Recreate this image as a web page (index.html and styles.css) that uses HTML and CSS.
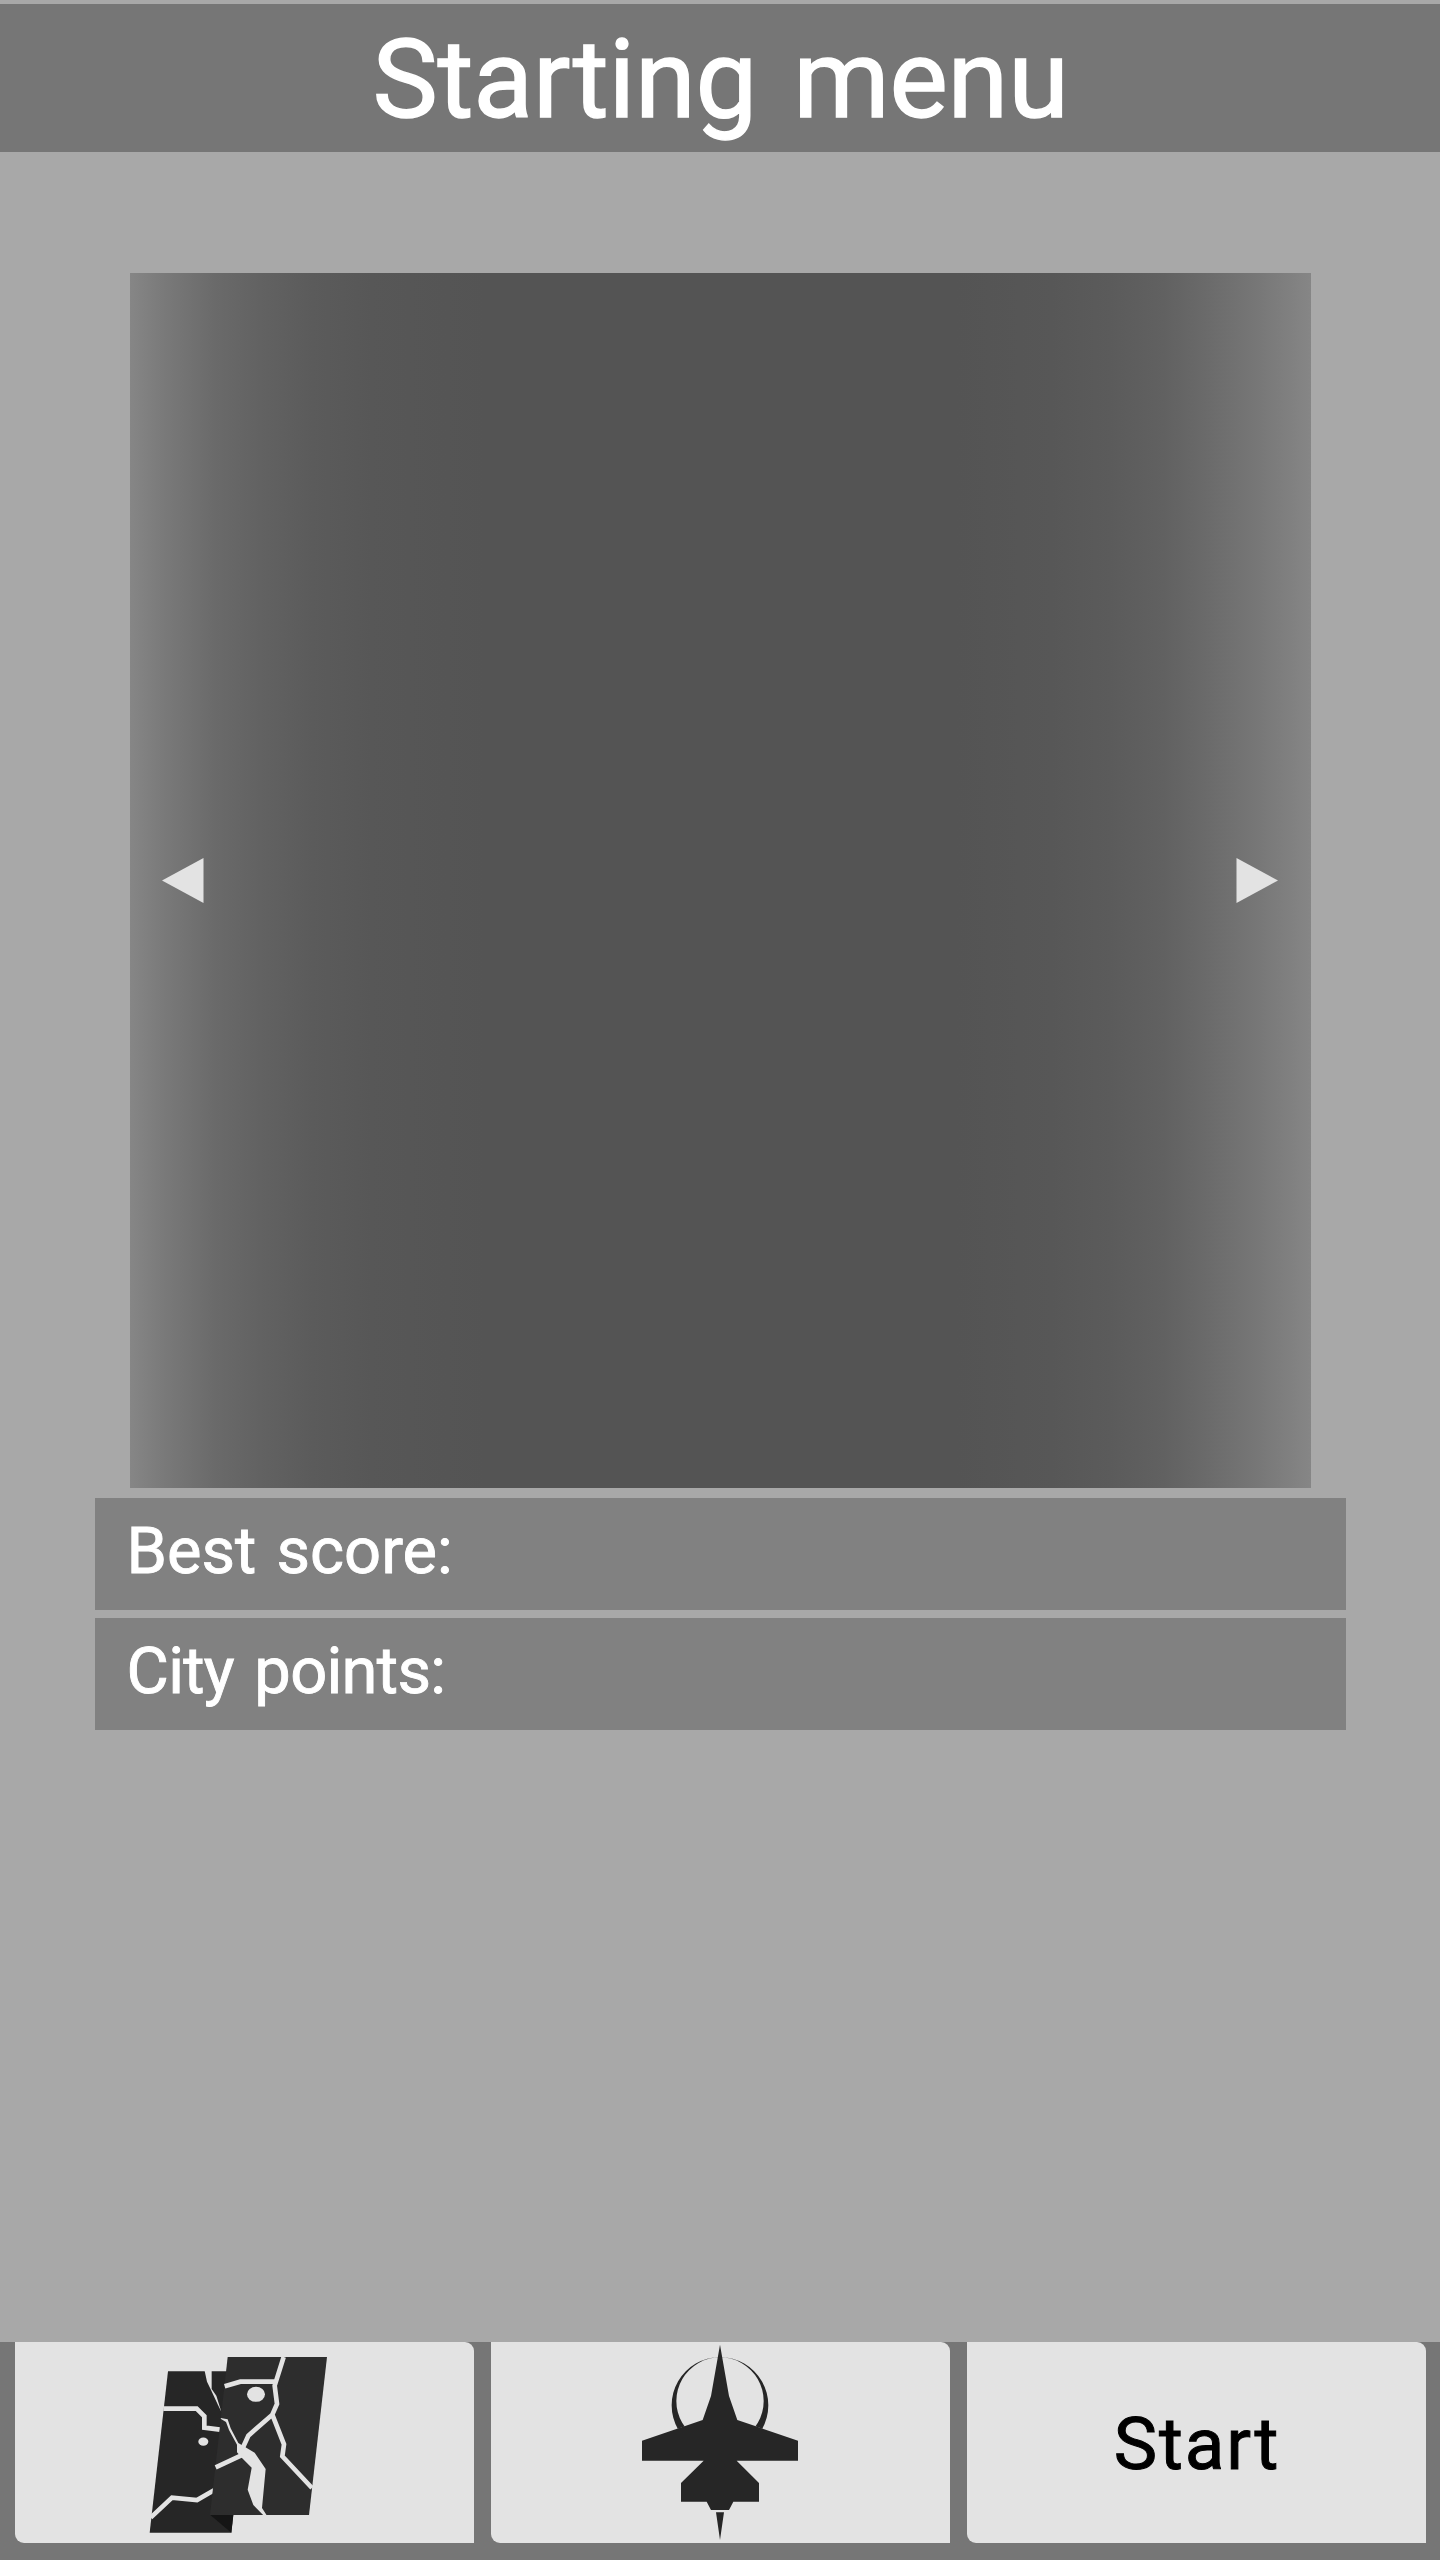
FILE: index.html
```html
<!DOCTYPE html>
<html lang="en">
<head>
<meta charset="utf-8">
<title>Starting menu</title>
<link rel="stylesheet" href="styles.css">
</head>
<body>
<div class="screen">
  <header class="header"><h1 class="title">Starting menu</h1></header>
  <main class="content">
    <section class="viewer">
      <svg class="arrow" viewBox="0 0 42 45"><path d="M0 22.5L41.5 0V45Z"/></svg>
      <svg class="arrow" viewBox="0 0 42 45"><path d="M42 22.5L.5 0V45Z"/></svg>
    </section>
    <div class="stats">
      <div class="stat"><span class="label best">Best score:</span></div>
      <div class="stat"><span class="label city">City points:</span></div>
    </div>
  </main>
  <nav class="actions">
    <button class="action" aria-label="Map">
      <svg class="icon" viewBox="-375 -9 1377 603">
        <path fill="#262626" d="M84 79H262L280 509L274 563H29Z"/>
        <path fill="#151515" d="M210 509H280L274 563Z"/>
        <path class="land" d="M194 78H215V132L229 152L244 200L234 180L213 135L201 110Z"/>
        <path class="road" d="M70 191H170L193 214V248L240 254M32 518L96 458L171 465L222 436"/>
        <ellipse class="land" cx="190" cy="290" rx="15" ry="12.500"/>
        <path fill="#2d2d2d" d="M263 36H561L507 510H210Z"/>
        <path class="land" d="M242 219L263 223L272 250L295 294L344 323L377 372L366 489L380 511H370L340 480L323 434L335 368L303 336L291 322V299L267 255L258 231L243 222Z"/>
        <path class="road" d="M254 124L301 110H405M431 36L404 122L411 177L397 209L325 272L304 318M397 209L432 298L427 334L516 429M227 367L304 331"/>
        <ellipse class="land" cx="348" cy="148" rx="27" ry="22.500"/>
      </svg>
    </button>
    <button class="action" aria-label="Aircraft">
      <svg class="icon" viewBox="-387 21 1377 603">
        <path class="plane" fill-rule="evenodd" d="M300 66A145 145 0 1 1 299.900 66ZM300 67A131 131 0 1 0 300.100 67Z"/>
        <path class="land" d="M174 281L248 256H352L428 281L490 376H110Z"/>
        <path class="plane" d="M300 29L327 183L352 255L534 317V377H350L417 444V500H340L327 525H273L260 500H183V444L251 377H66V317L248 255L273 183ZM288 532H312L300 615Z"/>
      </svg>
    </button>
    <button class="action start">Start</button>
  </nav>
</div>
</body>
</html>
```
FILE: styles.css
```css
* { box-sizing: border-box; }
body { margin: 0; background: #a8a8a8; font-family: Roboto, "Liberation Sans", sans-serif; }
.screen { display: flex; flex-direction: column; width: 1440px; height: 2560px; padding-top: 3.5px; }
.header { display: flex; justify-content: center; height: 148px; background: #767676; }
.title {
  margin: 0; padding: 2px 0 0 1px; color: #fff; font-size: 110px; font-weight: 400; line-height: 148px; white-space: nowrap;
  letter-spacing: -.2px; word-spacing: 9px; -webkit-text-stroke: 1.4px #fff;
}
.content { flex: 1; padding: 121.5px 93.6px 0 94.6px; }
.viewer {
  display: flex; align-items: center; justify-content: space-between;
  width: 1181px; height: 1215px; margin-left: 35.4px; padding: 0 33px 0 32px;
  background: linear-gradient(90deg, #868686 0%, #797979 3%, #6a6a6a 7.2%, #626262 11%, #5b5b5b 15.5%, #575757 20.5%, #545454 30%, #545454 70%, #575757 78%, #5b5b5b 83%, #616161 87.5%, #6a6a6a 91%, #777777 95.5%, #868686 100%);
}
.arrow { width: 42px; height: 45px; fill: #e3e3e3; }
.stats { display: flex; flex-direction: column; gap: 8px; margin-top: 9.5px; }
.stat { display: flex; height: 112px; padding-left: 32px; background: #818181; }
.label {
  padding-top: 1.5px; color: #fff; font-size: 65px; font-weight: 400; line-height: 105px; white-space: nowrap;
  -webkit-text-stroke: .9px #fff;
}
.best { letter-spacing: 0; word-spacing: 4px; }
.city { letter-spacing: -.7px; word-spacing: 5px; }
.actions { display: flex; gap: 17px; height: 218px; padding: 0 14.5px 17px; background: #767676; }
.action {
  display: flex; align-items: center; justify-content: center;
  width: 459px; height: 201px; margin: 0; padding: 0; border: 0;
  border-radius: 0 9px 0 9px; background: #e3e3e3; color: #000;
}
.icon { width: 459px; height: 201px; }
.land { fill: #e3e3e3; }
.road { fill: none; stroke: #e3e3e3; stroke-width: 14; }
.plane { fill: #262626; }
.start {
  padding: 2px 0 0 2px; font-family: Roboto, "Liberation Sans", sans-serif; font-size: 73px; font-weight: 400; line-height: 86px;
  letter-spacing: 1.8px; -webkit-text-stroke: 1px #000;
}
```
